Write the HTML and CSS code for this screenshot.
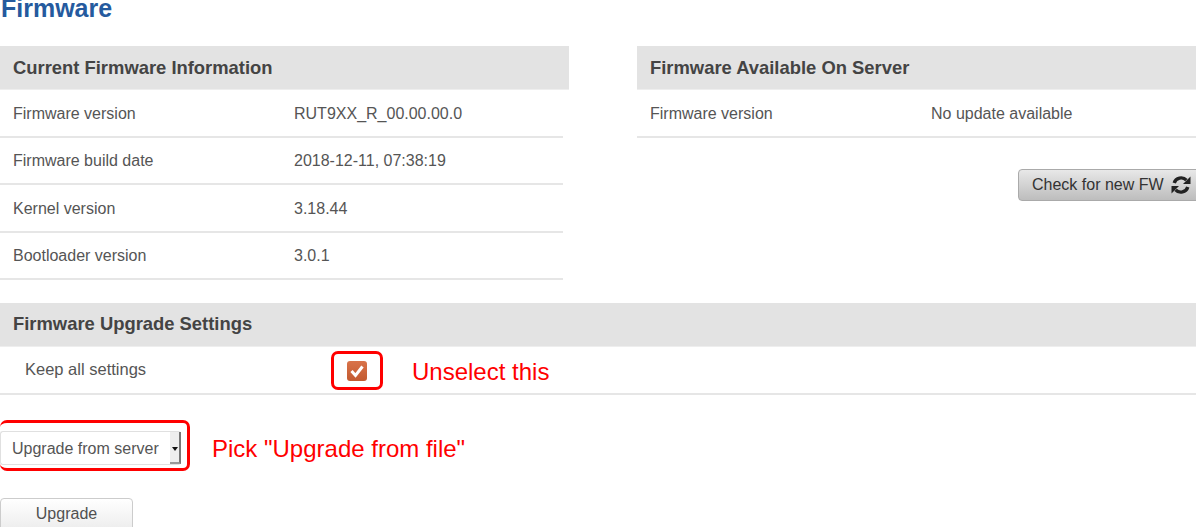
FILE: index.html
```html
<!DOCTYPE html>
<html lang="en">
<head>
    <meta charset="UTF-8">
    <title>Firmware</title>
    <link rel="stylesheet" href="styles.css">
</head>
<body>
    <h1>Firmware</h1>

    <div class="columns">
        <div class="col-left">
            <h2 class="section-title">Current Firmware Information</h2>
            <div class="info-list">
                <div class="info-row"><span class="info-label">Firmware version</span><span>RUT9XX_R_00.00.00.0</span></div>
                <div class="info-row"><span class="info-label">Firmware build date</span><span>2018-12-11, 07:38:19</span></div>
                <div class="info-row"><span class="info-label">Kernel version</span><span>3.18.44</span></div>
                <div class="info-row"><span class="info-label">Bootloader version</span><span>3.0.1</span></div>
            </div>
        </div>
        <div class="col-right">
            <h2 class="section-title">Firmware Available On Server</h2>
            <div class="info-row"><span class="info-label">Firmware version</span><span>No update available</span></div>
            <div class="check-wrap">
                <button class="check-btn">Check for new FW
                    <svg class="refresh-icon" viewBox="0 0 22 22" width="22" height="22">
                        <path d="M4.2 9 A7.2 7.2 0 0 1 16.4 6.2" fill="none" stroke="#222" stroke-width="3.4"/>
                        <path d="M20.5 2.5 V10 H13 Z" fill="#222"/>
                        <path d="M17.8 13 A7.2 7.2 0 0 1 5.6 15.8" fill="none" stroke="#222" stroke-width="3.4"/>
                        <path d="M1.5 19.5 V12 H9 Z" fill="#222"/>
                    </svg>
                </button>
            </div>
        </div>
    </div>

    <h2 class="section-title settings-title">Firmware Upgrade Settings</h2>
    <div class="setting-row">
        <span class="setting-label">Keep all settings</span>
        <span class="mark-box">
            <span class="checkbox">
                <svg viewBox="0 0 20 20" width="20" height="20">
                    <path d="M4.5 10 L8.5 14.5 L15.5 5.5" fill="none" stroke="#fff" stroke-width="3"/>
                </svg>
            </span>
        </span>
        <span class="note note-check">Unselect this</span>
    </div>

    <div class="select-row">
        <div class="mark-box select-mark">
            <div class="select">
                <span class="select-text">Upgrade from server</span>
                <span class="select-arrow"></span>
            </div>
        </div>
        <span class="note note-select">Pick "Upgrade from file"</span>
    </div>

    <button class="upgrade-btn">Upgrade</button>
</body>
</html>
```

FILE: styles.css
```css
* {
    margin: 0;
    padding: 0;
    box-sizing: border-box;
}

html, body {
    height: 527px;
    overflow: hidden;
}

body {
    background: #fff;
    color: #555;
    font-family: "Liberation Sans", Arial, sans-serif;
    font-size: 16px;
}

h1 {
    height: 46px;
    padding-left: 1px;
    line-height: 17px;
    font-size: 25px;
    font-weight: bold;
    color: #255a9e;
}

.columns {
    display: flex;
    height: 257px;
}

.col-left {
    width: 569px;
}

.col-right {
    margin-left: 68px;
    flex: 1;
}

.section-title {
    height: 44px;
    padding-left: 13px;
    line-height: 44px;
    font-size: 18.4px;
    font-weight: bold;
    color: #444;
    background: #e3e3e3;
    border-bottom: 1px solid #eee;
}

.info-list {
    width: 563px;
}

.info-row {
    display: flex;
    align-items: center;
    height: 47.5px;
    padding-left: 13px;
    padding-top: 2px;
    border-bottom: 2px solid #e6e6e6;
}

.info-label {
    width: 281px;
}

.check-wrap {
    display: flex;
    justify-content: flex-end;
    padding-top: 31px;
}

.check-btn {
    display: flex;
    flex: none;
    align-items: center;
    gap: 6px;
    width: 182px;
    height: 32px;
    margin-right: -4px;
    padding-left: 13px;
    font-family: inherit;
    font-size: 16px;
    color: #333;
    background: linear-gradient(#e8e8e8, #bdbdbd);
    border: 1px solid #aaa;
    border-radius: 4px;
}

.refresh-icon {
    flex: none;
}

.settings-title {
    line-height: 41px;
}

.setting-row {
    display: flex;
    align-items: center;
    height: 48px;
    border-bottom: 2px solid #e6e6e6;
}

.setting-label {
    width: 331px;
    padding-left: 25px;
    padding-bottom: 2px;
    font-size: 16.5px;
}

.mark-box {
    border: 3px solid #f00;
    border-radius: 7px;
}

.setting-row .mark-box {
    display: flex;
    align-items: center;
    justify-content: center;
    width: 52px;
    height: 39px;
    margin-top: 1px;
}

.checkbox {
    display: block;
    width: 20px;
    height: 20px;
    border-radius: 3px;
    background: linear-gradient(#d9734a, #c25a30);
}

.checkbox svg {
    display: block;
}

.note {
    font-size: 24px;
    color: #f00;
}

.note-check {
    margin-left: 29px;
    margin-top: 3px;
}

.select-row {
    display: flex;
    align-items: center;
    margin-top: 25px;
}

.select-mark {
    width: 190px;
    height: 51px;
    padding-top: 8px;
    border-left: 0;
}

.select {
    display: flex;
    justify-content: space-between;
    width: 181px;
    height: 34px;
    line-height: 34px;
    padding-left: 11px;
    border: 1px solid #e0e0e0;
    border-right: 0;
    border-radius: 3px;
}

.select-arrow {
    position: relative;
    width: 11px;
    background: #eee;
    border-right: 2px solid #777;
    border-bottom: 2px solid #999;
}

.select-arrow::after {
    content: "";
    position: absolute;
    top: 15px;
    left: 2px;
    border-top: 4px solid #111;
    border-left: 3px solid transparent;
    border-right: 3px solid transparent;
}

.note-select {
    margin-left: 22px;
    margin-top: 7px;
}

.upgrade-btn {
    display: block;
    width: 133px;
    height: 34px;
    margin-top: 27px;
    padding-bottom: 2px;
    font-family: inherit;
    font-size: 16px;
    color: #505050;
    background: linear-gradient(#fff, #ececec);
    border: 1px solid #ccc;
    border-radius: 4px;
}
```
